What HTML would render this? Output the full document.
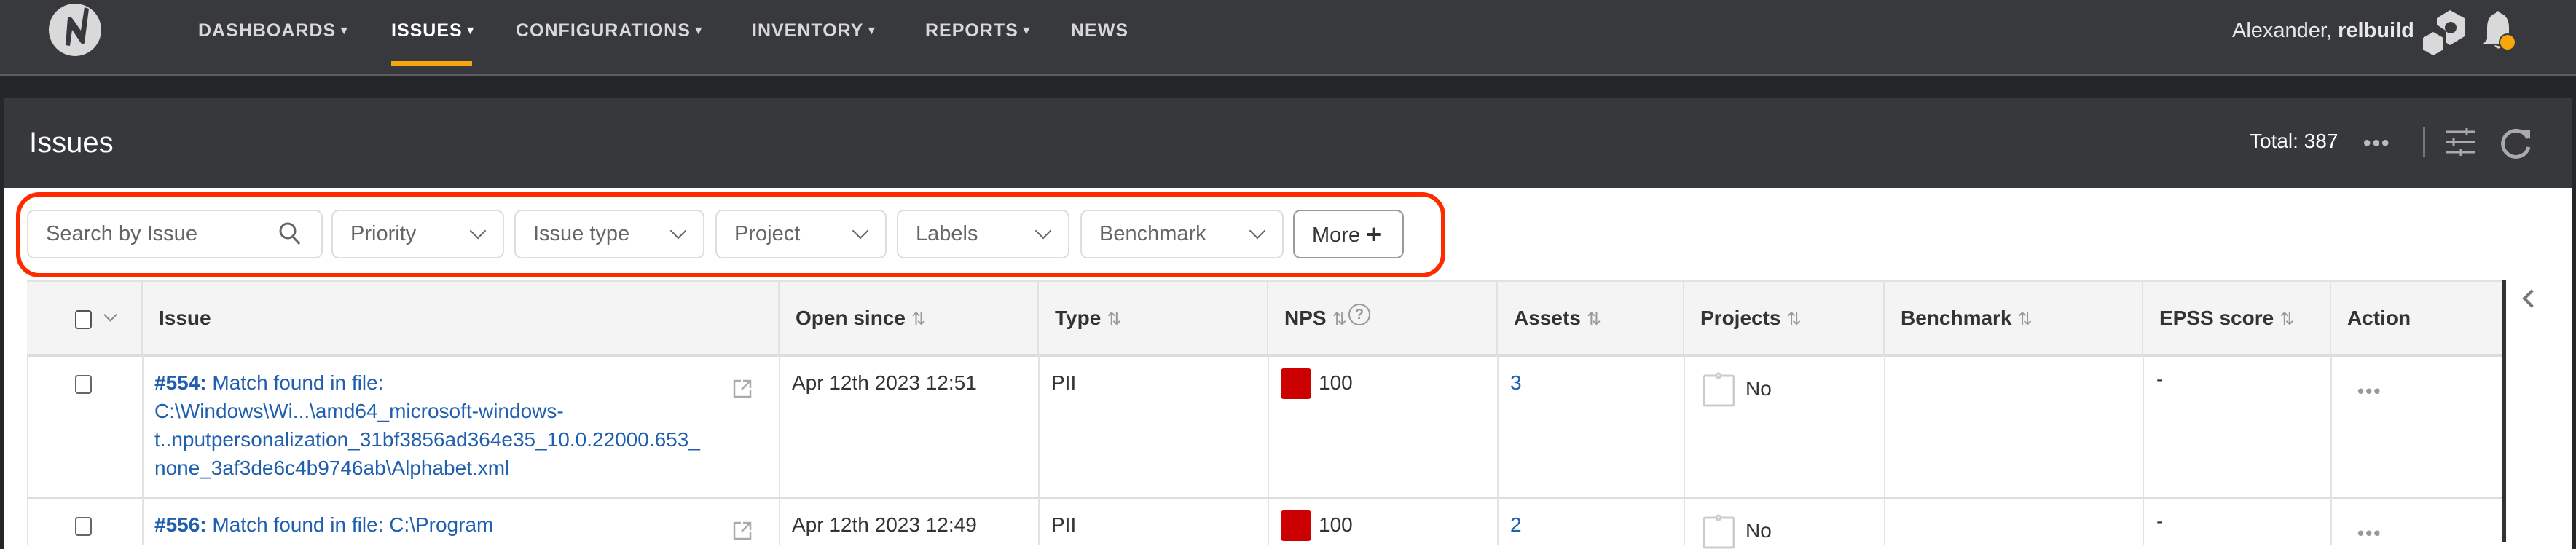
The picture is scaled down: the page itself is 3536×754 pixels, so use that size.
<!DOCTYPE html>
<html><head><meta charset="utf-8"><style>
*{box-sizing:border-box;margin:0;padding:0}
body{width:3536px;height:742px;overflow:hidden;background:#25262a;font-family:"Liberation Sans",sans-serif;position:relative}
.a{position:absolute}
.nav{left:0;top:0;width:3536px;height:104px;background:#38393c;border-bottom:3px solid #5c5d60}
.ni{position:absolute;top:28px;font-size:25px;font-weight:bold;color:#d8d8d8;letter-spacing:1px;white-space:nowrap}
.ni span{font-size:16px;vertical-align:3px;margin-left:3px}
.panel{left:6px;top:134px;width:3524px;height:620px;background:#fff}
.ph{left:6px;top:134px;width:3524px;height:124px;background:#37383b}
.fb{position:absolute;top:288px;height:67px;border:2px solid #dedede;border-radius:10px;background:#fff;font-size:29px;color:#666;line-height:63px;padding-left:24px}
.chev{position:absolute;right:26px;top:19px;width:16px;height:16px;border-right:2px solid #666;border-bottom:2px solid #666;transform:rotate(45deg)}
.th{position:absolute;top:387px;height:101px;background:#f4f4f4;border-right:2px solid #e2e2e2;font-size:28px;font-weight:bold;color:#333;padding:34px 0 0 22px;white-space:nowrap}
.srt{color:#999;font-weight:normal;font-size:24px;margin-left:8px}
.vl{position:absolute;width:2px;background:#e2e2e2}
.hl{position:absolute;left:37px;width:3397px;height:4px;background:#ddd}
.t{position:absolute;font-size:28px;color:#333;white-space:nowrap}
.lk{color:#1f5fae}
.cb{position:absolute;width:23px;height:26px;border:2px solid #666;border-radius:4px;background:#fff}
.dots{position:absolute;font-size:26px;color:#999;letter-spacing:2px;font-weight:bold}
</style></head><body>
<div class="a nav"></div>
<svg class="a" style="left:66px;top:4px" width="74" height="74" viewBox="0 0 74 74"><circle cx="37" cy="37" r="36" fill="#d9d9d9"/><path d="M27 20 Q30 18 33 21 L45 38 L50 6 L56 8 L50 55 Q48 58 45 55 L33 37 L30 59 L24 58 Z" fill="#38393c"/></svg>
<div class="ni" style="left:272px">DASHBOARDS<span>▼</span></div>
<div class="ni" style="left:537px;color:#fff">ISSUES<span>▼</span></div>
<div class="a" style="left:537px;top:84px;width:111px;height:6px;background:#f5a70f"></div>
<div class="ni" style="left:708px">CONFIGURATIONS<span>▼</span></div>
<div class="ni" style="left:1032px">INVENTORY<span>▼</span></div>
<div class="ni" style="left:1270px">REPORTS<span>▼</span></div>
<div class="ni" style="left:1470px">NEWS</div>
<div class="a" style="left:3064px;top:26px;font-size:29px;color:#e8e8e8;white-space:nowrap">Alexander, <b>relbuild</b></div>
<svg class="a" style="left:3325px;top:12px" width="64" height="64" viewBox="0 0 64 64"><path d="M38 2 L58 13 L58 38 L38 50 L32 46 L32 30 L20 22 L20 13 Z" fill="#d9d9d9"/><circle cx="39" cy="26" r="8" fill="#38393c"/><path d="M15 32 L29 40 L29 56 L15 64 L1 56 L1 40 Z" fill="#d9d9d9"/></svg>
<svg class="a" style="left:3408px;top:14px" width="50" height="60" viewBox="0 0 50 60"><path d="M18 2 Q22 0 24 4 Q36 8 36 24 L36 40 L40 46 L1 46 L6 40 L6 24 Q6 8 18 4 Z" fill="#d9d9d9"/><path d="M16 48 Q20 56 26 50" fill="#d9d9d9"/><circle cx="34" cy="44" r="12" fill="#38393c"/><circle cx="34" cy="44" r="10" fill="#f7a60c"/></svg>
<div class="a panel"></div>
<div class="a ph"></div>
<div class="a" style="left:40px;top:174px;font-size:40px;color:#fff">Issues</div>
<div class="a" style="left:3088px;top:178px;font-size:28px;color:#fff">Total: 387</div>
<div class="a" style="left:3244px;top:180px;font-size:30px;color:#bbb;font-weight:bold;letter-spacing:2px">•••</div>
<div class="a" style="left:3326px;top:175px;width:3px;height:40px;background:#777"></div>
<svg class="a" style="left:3356px;top:175px" width="42" height="42" viewBox="0 0 42 42" stroke="#aaa" stroke-width="3"><path d="M1 6H41M1 20H41M1 34H41"/><path d="M30 1V11M12 15V25M22 29V39"/></svg>
<svg class="a" style="left:3430px;top:172px" width="48" height="48" viewBox="0 0 48 48" fill="none" stroke="#aaa" stroke-width="5"><path d="M40 18 A18 18 0 1 0 41 30"/><path d="M30 6 L43 6 L43 19 Z" fill="#aaa" stroke="none"/></svg>
<div class="a" style="left:22px;top:264px;width:1962px;height:117px;border:6px solid #ff2b00;border-radius:32px"></div>
<div class="fb" style="left:37px;width:406px">Search by Issue</div>
<svg class="a" style="left:382px;top:304px" width="32" height="34" viewBox="0 0 32 34" fill="none" stroke="#666" stroke-width="3"><circle cx="13" cy="13" r="10"/><path d="M20 21 L29 31"/></svg>
<div class="fb" style="left:455px;width:237px">Priority<div class="chev"></div></div>
<div class="fb" style="left:706px;width:261px">Issue type<div class="chev"></div></div>
<div class="fb" style="left:982px;width:235px">Project<div class="chev"></div></div>
<div class="fb" style="left:1231px;width:237px">Labels<div class="chev"></div></div>
<div class="fb" style="left:1483px;width:279px">Benchmark<div class="chev"></div></div>
<div class="fb" style="left:1775px;width:152px;border-color:#999;color:#333;padding-left:24px">More <b style="font-size:36px;vertical-align:-2px">+</b></div>
<div class="th" style="left:37px;width:159px;padding-left:66px"></div>
<div class="cb" style="left:103px;top:426px;border-color:#555"></div>
<div class="a" style="left:145px;top:426px;width:13px;height:13px;border-right:2px solid #888;border-bottom:2px solid #888;transform:rotate(45deg)"></div>
<div class="th" style="left:196px;width:874px">Issue</div>
<div class="th" style="left:1070px;width:356px">Open since<span class="srt">⇅</span></div>
<div class="th" style="left:1426px;width:315px">Type<span class="srt">⇅</span></div>
<div class="th" style="left:1741px;width:315px">NPS<span class="srt">⇅</span><span class="a" style="left:110px;top:30px;width:30px;height:30px;border:2px solid #999;border-radius:50%;font-size:20px;color:#999;text-align:center;line-height:26px">?</span></div>
<div class="th" style="left:2056px;width:256px">Assets<span class="srt">⇅</span></div>
<div class="th" style="left:2312px;width:275px">Projects<span class="srt">⇅</span></div>
<div class="th" style="left:2587px;width:355px">Benchmark<span class="srt">⇅</span></div>
<div class="th" style="left:2942px;width:258px">EPSS score<span class="srt">⇅</span></div>
<div class="th" style="left:3200px;width:234px;border-right:none">Action</div>
<div class="a" style="left:37px;top:384px;width:3397px;height:3px;background:#e2e2e2"></div>
<div class="hl" style="top:486px"></div>
<div class="hl" style="top:682px"></div>
<div class="vl" style="left:37px;top:488px;height:260px"></div>
<div class="vl" style="left:195px;top:488px;height:260px"></div>
<div class="vl" style="left:1069px;top:488px;height:260px"></div>
<div class="vl" style="left:1425px;top:488px;height:260px"></div>
<div class="vl" style="left:1740px;top:488px;height:260px"></div>
<div class="vl" style="left:2055px;top:488px;height:260px"></div>
<div class="vl" style="left:2311px;top:488px;height:260px"></div>
<div class="vl" style="left:2586px;top:488px;height:260px"></div>
<div class="vl" style="left:2941px;top:488px;height:260px"></div>
<div class="vl" style="left:3199px;top:488px;height:260px"></div>
<div class="a" style="left:3434px;top:385px;width:6px;height:360px;background:#333"></div>
<div class="a" style="left:3466px;top:401px;width:18px;height:18px;border-left:4px solid #777;border-bottom:4px solid #777;transform:rotate(45deg)"></div>
<div class="cb" style="left:103px;top:515px"></div>
<div class="t lk" style="left:212px;top:506px;line-height:39px">
<b>#554:</b> Match found in file:<br>C:\Windows\Wi...\amd64_microsoft-windows-<br>t..nputpersonalization_31bf3856ad364e35_10.0.22000.653_<br>none_3af3de6c4b9746ab\Alphabet.xml</div>
<svg class="a" style="left:1006px;top:521px" width="26" height="26" viewBox="0 0 26 26" fill="none" stroke="#aaa" stroke-width="2.5"><path d="M11 2H2V24H24V15"/><path d="M14 2H24V12M24 2L12 14"/></svg>
<div class="t" style="left:1087px;top:510px">Apr 12th 2023 12:51</div>
<div class="t" style="left:1443px;top:510px">PII</div>
<div class="a" style="left:1758px;top:506px;width:42px;height:42px;background:#cc0000;border-radius:4px"></div>
<div class="t" style="left:1810px;top:510px">100</div>
<div class="t lk" style="left:2073px;top:510px">3</div>
<svg class="a" style="left:2337px;top:511px" width="45" height="48" viewBox="0 0 45 48" fill="none" stroke="#ccc" stroke-width="3"><rect x="2" y="5" width="41" height="41" rx="2"/><circle cx="22" cy="5" r="3" fill="#fff"/></svg>
<div class="t" style="left:2396px;top:518px">No</div>
<div class="t" style="left:2960px;top:505px">-</div>
<div class="dots" style="left:3236px;top:522px">•••</div>
<div class="cb" style="left:103px;top:710px"></div>
<div class="t lk" style="left:212px;top:705px"><b>#556:</b> Match found in file: C:\Program</div>
<svg class="a" style="left:1006px;top:716px" width="26" height="26" viewBox="0 0 26 26" fill="none" stroke="#aaa" stroke-width="2.5"><path d="M11 2H2V24H24V15"/><path d="M14 2H24V12M24 2L12 14"/></svg>
<div class="t" style="left:1087px;top:705px">Apr 12th 2023 12:49</div>
<div class="t" style="left:1443px;top:705px">PII</div>
<div class="a" style="left:1758px;top:701px;width:42px;height:42px;background:#cc0000;border-radius:4px"></div>
<div class="t" style="left:1810px;top:705px">100</div>
<div class="t lk" style="left:2073px;top:705px">2</div>
<svg class="a" style="left:2337px;top:706px" width="45" height="48" viewBox="0 0 45 48" fill="none" stroke="#ccc" stroke-width="3"><rect x="2" y="5" width="41" height="41" rx="2"/><circle cx="22" cy="5" r="3" fill="#fff"/></svg>
<div class="t" style="left:2396px;top:713px">No</div>
<div class="t" style="left:2960px;top:700px">-</div>
<div class="dots" style="left:3236px;top:717px">•••</div>
</body></html>
